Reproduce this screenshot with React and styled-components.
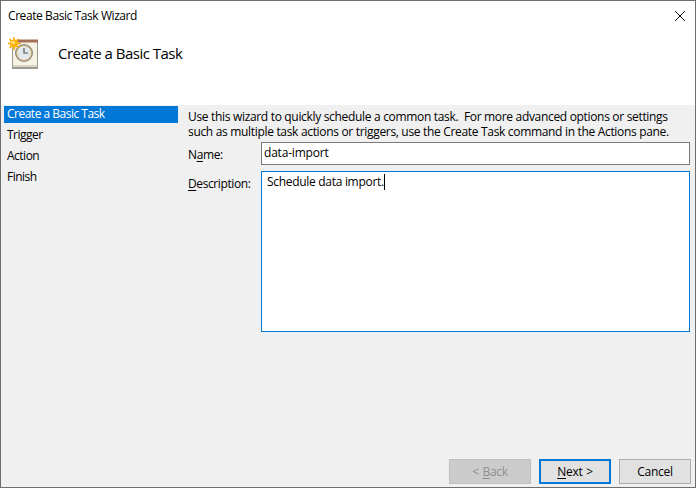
import React from "react";
import styled, { createGlobalStyle } from "styled-components";

const Global = createGlobalStyle`
  html, body { margin: 0; padding: 0; background: #f0f0f0; }
  body { font-family: "Open Sans", "Noto Sans", "Liberation Sans", sans-serif; font-size: 12px; color: #000; }
  * { box-sizing: border-box; }
`;

const Frame = styled.div`
  width: 696px; height: 488px; display: flex; flex-direction: column;
  background: #f0f0f0;
  border: 1px solid #6e6e6e;
  overflow: hidden;
`;
const Top = styled.header`
  height: 104px; background: #fff; display: flex; flex-direction: column; flex: none;
`;
const TitleBar = styled.div`
  height: 29px; display: flex; align-items: center; justify-content: space-between;
  padding: 0 10px 0 7px; flex: none;
`;
const Title = styled.span` font-size: 12px; letter-spacing: -0.42px; `;
const Close = styled.svg` width: 10px; height: 10px; display: block; `;
const Banner = styled.div`
  display: flex; align-items: flex-start; padding: 6px 0 0 4px; gap: 19px;
`;
const BannerIcon = styled.svg` width: 34px; height: 38px; display: block; flex: none; `;
const Heading = styled.h1`
  margin: 7px 0 0; font-size: 15px; font-weight: 400; line-height: 20px; letter-spacing: -0.5px;
`;
const Body = styled.main` flex: 1; display: flex; min-height: 0; `;
const Side = styled.nav`
  width: 177px; flex: none; padding: 1px 0 0 3px; display: flex; flex-direction: column; gap: 4px;
`;
const Step = styled.div`
  height: 17px; line-height: 16px; padding-left: 3px; letter-spacing: -0.5px;
  background: ${p => (p.$active ? "#0078d7" : "transparent")};
  color: ${p => (p.$active ? "#fff" : "#000")};
`;
const Content = styled.section`
  flex: 1; display: flex; flex-direction: column; padding: 4px 4px 3px 10px; min-width: 0;
`;
const Intro = styled.p`
  margin: 0 0 3px; line-height: 15px; letter-spacing: -0.32px; white-space: nowrap;
`;
const Fields = styled.div`
  display: grid; grid-template-columns: 73px 429px; grid-template-rows: 23px 161px; row-gap: 6px;
`;
const Label = styled.label`
  line-height: 16px; padding-top: 5px; letter-spacing: -0.4px;
  u { text-underline-offset: 2px; }
`;
const TextBox = styled.div`
  border: 1px solid ${p => (p.$focus ? "#0078d7" : "#7a7a7a")};
  background: #fff; line-height: 16px; letter-spacing: ${p => (p.$focus ? "-0.3px" : "-0.2px")};
  padding: ${p => (p.$focus ? "2px 0 0 5px" : "2px 0 0 2px")};
`;
const Caret = styled.span`
  display: inline-block; width: 1px; height: 16px; background: #000; vertical-align: top;
`;
const Footer = styled.footer`
  margin-top: auto; display: flex; justify-content: flex-end; gap: 8px;
`;
const Button = styled.div`
  width: ${p => p.$w}px; height: 25px; display: flex; align-items: center; justify-content: center;
  background: ${p => (p.$disabled ? "#cccccc" : "#e1e1e1")};
  color: ${p => (p.$disabled ? "#8f8f8f" : "#000")};
  border: ${p => (p.$default ? "2px solid #0078d7" : `1px solid ${p.$disabled ? "#bfbfbf" : "#adadad"}`)};
  letter-spacing: -0.3px; word-spacing: 1px;
  u { text-underline-offset: 2px; }
`;

export default function App() {
  return (
    <>
      <Global />
      <Frame>
        <Top>
          <TitleBar>
            <Title>Create Basic Task Wizard</Title>
            <Close viewBox="0 0 10 10">
              <path d="M0 0 L10 10 M10 0 L0 10" stroke="#111" strokeWidth="1" fill="none" />
            </Close>
          </TitleBar>
          <Banner>
            <BannerIcon viewBox="0 0 34 38">
              <rect x="7" y="4" width="26" height="29" fill="#9c9a8e" />
              <rect x="8" y="5" width="24" height="25" fill="#f6f2e6" />
              <rect x="12" y="3.5" width="21" height="3" fill="#a5705a" />
              <rect x="8" y="29" width="24" height="2" fill="#d8d4c6" />
              <circle cx="19" cy="17" r="9" fill="#8c8c86" />
              <circle cx="19" cy="17" r="7.5" fill="#e3e8ec" />
              <circle cx="19" cy="17" r="7.5" fill="none" stroke="#c9a860" strokeWidth="1" />
              <path d="M19 12 V17 H23" stroke="#555" strokeWidth="1.2" fill="none" />
              <g stroke="#f5a800" strokeWidth="1.5">
                <path d="M9 1 V14 M3 7.5 H16 M4.5 3 L13.5 12 M13.5 3 L4.5 12" />
              </g>
              <circle cx="9" cy="7.5" r="4" fill="#ffb400" />
              <circle cx="8" cy="6.5" r="1.8" fill="#ffe27a" />
            </BannerIcon>
            <Heading>Create a Basic Task</Heading>
          </Banner>
        </Top>
        <Body>
          <Side>
            <Step $active>Create a Basic Task</Step>
            <Step>Trigger</Step>
            <Step>Action</Step>
            <Step>Finish</Step>
          </Side>
          <Content>
            <Intro>
              Use this wizard to quickly schedule a common task.&nbsp; For more advanced options or settings
              <br />
              such as multiple task actions or triggers, use the Create Task command in the Actions pane.
            </Intro>
            <Fields>
              <Label>N<u>a</u>me:</Label>
              <TextBox>data-import</TextBox>
              <Label><u>D</u>escription:</Label>
              <TextBox $focus>Schedule data import.<Caret /></TextBox>
            </Fields>
            <Footer>
              <Button $w={82} $disabled><span>&lt; <u>B</u>ack</span></Button>
              <Button $w={72} $default><span><u>N</u>ext &gt;</span></Button>
              <Button $w={72}>Cancel</Button>
            </Footer>
          </Content>
        </Body>
      </Frame>
    </>
  );
}
